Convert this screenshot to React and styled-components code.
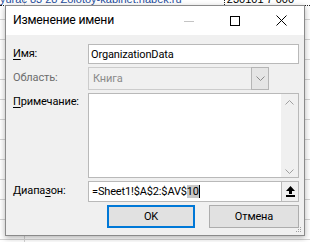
import React from "react"
import styled, { createGlobalStyle } from "styled-components"

const Global = createGlobalStyle`
  html, body {
    margin: 0;
    padding: 0;
    background: #ffffff;
  }
  body {
    font-family: Roboto, "Noto Sans", sans-serif;
  }
`

// excel sheet peeking out behind the dialog
const Sheet = styled.div`
  position: relative;
  width: 310px;
  height: 242px;
  overflow: hidden;
  background-color: #ffffff;
  background-image:
    repeating-linear-gradient(to bottom, transparent 0, transparent 19px, #d4d4d4 19px, #d4d4d4 20px),
    linear-gradient(to right, transparent 24px, #d4d4d4 24px, #d4d4d4 25px, transparent 25px);
`

const TopRow = styled.div`
  display: flex;
  height: 5px;
  overflow: hidden;
  border-bottom: 1px dotted #222;
  font-family: "Liberation Sans", sans-serif;
  font-size: 11px;
  line-height: 11px;
  color: #1f4e9c;
`

const TopCell = styled.div`
  margin-top: -6px;
  padding-left: ${p => p.$pad || 0}px;
  width: ${p => p.$w}px;
  white-space: nowrap;
  overflow: hidden;
  border-right: ${p => (p.$dotted ? "1px dotted #222" : "none")};
  color: ${p => p.$color || "inherit"};
`

const Dialog = styled.div`
  position: absolute;
  left: 5px;
  top: 5px;
  width: 298px;
  height: 229px;
  display: flex;
  flex-direction: column;
  background: #f0f0f0;
  border: 1px solid #8a8a8a;
  box-shadow: 0 2px 6px rgba(0, 0, 0, 0.3);
`

const TitleBar = styled.div`
  height: 29px;
  display: flex;
  align-items: center;
  background: #ffffff;
  padding-left: 7px;
`

const Title = styled.div`
  flex: 1;
  font-size: 12.2px;
  letter-spacing: -0.2px;
  color: #000;
  padding-bottom: 1px;
`

const WinButton = styled.div`
  width: 46px;
  height: 29px;
  display: flex;
  align-items: center;
  justify-content: center;
`

const Body = styled.div`
  flex: 1;
  display: grid;
  grid-template-columns: 75px 1fr;
  grid-template-rows: 20px 23px 85px 21px 23px;
  row-gap: 3px;
  padding: 9px 5px 0 7px;
  font-size: 11px;
  letter-spacing: -0.15px;
  position: relative;
`

const Label = styled.div`
  display: flex;
  align-items: ${p => (p.$top ? "flex-start" : "center")};
  padding-top: ${p => (p.$top ? 2 : 0)}px;
  padding-bottom: ${p => (p.$top ? 0 : 2)}px;
  color: ${p => (p.$disabled ? "#6d6d6d" : "#000")};
  white-space: nowrap;
`

const Key = styled.span`
  text-decoration: underline;
  text-underline-offset: 2px;
`

const TextBox = styled.div`
  display: flex;
  align-items: center;
  background: #ffffff;
  border: 1px solid #b9b9b9;
  padding-left: 2px;
  color: #000;
  white-space: nowrap;
  overflow: hidden;
`

const Select = styled.div`
  display: flex;
  align-items: stretch;
  width: 179px;
  border: 1px solid #cccccc;
  background: #f0f0f0;
  color: #8a8a8a;
`

const SelectText = styled.div`
  flex: 1;
  display: flex;
  align-items: center;
  padding-left: 4px;
`

const DropButton = styled.div`
  width: 16px;
  display: flex;
  align-items: center;
  justify-content: center;
  background: #e5e5e5;
  border: 1px solid #b5b5b5;
  margin: -1px -1px -1px 0;
`

const Memo = styled.div`
  display: flex;
  background: #ffffff;
  border: 1px solid #b9b9b9;
`

const MemoText = styled.div`
  flex: 1;
`

const ScrollBar = styled.div`
  width: 17px;
  display: flex;
  flex-direction: column;
  justify-content: space-between;
  align-items: center;
  background: #f0f0f0;
  padding: 6px 0 3px;
`

const RangeBox = styled(TextBox)`
  padding-left: 3px;
  align-items: stretch;
`

const RangeText = styled.div`
  flex: 1;
  display: flex;
  align-items: center;
`

const Selected = styled.span`
  background: #c8c8c8;
  border-right: 1px solid #000;
`

const RefButton = styled.div`
  width: 16px;
  display: flex;
  align-items: center;
  justify-content: center;
  background: #f0f0f0;
  border-left: 1px solid #b9b9b9;
`

const Buttons = styled.div`
  grid-column: 1 / 3;
  display: flex;
  justify-content: flex-end;
  gap: 14px;
`

const Button = styled.div`
  width: ${p => p.$w}px;
  display: flex;
  align-items: center;
  justify-content: center;
  background: #e1e1e1;
  border: ${p => (p.$primary ? "2px solid #0078d7" : "1px solid #adadad")};
  box-sizing: border-box;
  color: #000;
`

const Grip = styled.svg`
  position: absolute;
  right: 2px;
  bottom: 2px;
`

const Chevron = ({ up, color = "#a0a0a0" }) => (
  <svg width="9" height="5" viewBox="0 0 9 5">
    <path
      d={up ? "M0.5 4.5 L4.5 0.5 L8.5 4.5" : "M0.5 0.5 L4.5 4.5 L8.5 0.5"}
      fill="none"
      stroke={color}
      strokeWidth="1"
    />
  </svg>
)

export default function App() {
  return (
    <>
      <Global />
      <Sheet>
        <TopRow>
          <TopCell $w={226} $dotted>
            yurac 83 28 Zolotoy-kabinet.habek.ru
          </TopCell>
          <TopCell $w={84} $pad={2} $color="#000">
            230101 7 000
          </TopCell>
        </TopRow>

        <Dialog>
          <TitleBar>
            <Title>Изменение имени</Title>
            <WinButton>
              <svg width="10" height="10" viewBox="0 0 10 10">
                <path d="M0 5.5 H10" stroke="#c4c4c4" strokeWidth="1" />
              </svg>
            </WinButton>
            <WinButton>
              <svg width="10" height="10" viewBox="0 0 10 10">
                <rect x="0.5" y="0.5" width="9" height="9" fill="none" stroke="#000" />
              </svg>
            </WinButton>
            <WinButton>
              <svg width="11" height="11" viewBox="0 0 11 11">
                <path d="M0.5 0.5 L10.5 10.5 M10.5 0.5 L0.5 10.5" stroke="#000" strokeWidth="1" />
              </svg>
            </WinButton>
          </TitleBar>

          <Body>
            <Label>
              <span>
                <Key>И</Key>мя:
              </span>
            </Label>
            <TextBox>OrganizationData</TextBox>

            <Label $disabled>Область:</Label>
            <Select>
              <SelectText>Книга</SelectText>
              <DropButton>
                <Chevron color="#8a8a8a" />
              </DropButton>
            </Select>

            <Label $top>
              <span>
                <Key>П</Key>римечание:
              </span>
            </Label>
            <Memo>
              <MemoText />
              <ScrollBar>
                <Chevron up />
                <Chevron />
              </ScrollBar>
            </Memo>

            <Label>
              <span>
                Диапа<Key>з</Key>он:
              </span>
            </Label>
            <RangeBox>
              <RangeText>
                =Sheet1!$A$2:$AV$<Selected>10</Selected>
              </RangeText>
              <RefButton>
                <svg width="9" height="11" viewBox="0 0 9 11">
                  <path d="M4.5 0 L9 5 H6 V8 H3 V5 H0 Z" fill="#000" />
                  <rect x="0" y="9" width="9" height="2" fill="#000" />
                </svg>
              </RefButton>
            </RangeBox>

            <Buttons>
              <Button $primary $w={88}>OK</Button>
              <Button $w={90}>Отмена</Button>
            </Buttons>

            <Grip width="7" height="7" viewBox="0 0 7 7">
              <rect x="5" y="1" width="1" height="1" fill="#a0a0a0" />
              <rect x="3" y="3" width="1" height="1" fill="#a0a0a0" />
              <rect x="5" y="3" width="1" height="1" fill="#a0a0a0" />
              <rect x="1" y="5" width="1" height="1" fill="#a0a0a0" />
              <rect x="3" y="5" width="1" height="1" fill="#a0a0a0" />
              <rect x="5" y="5" width="1" height="1" fill="#a0a0a0" />
            </Grip>
          </Body>
        </Dialog>
      </Sheet>
    </>
  )
}
